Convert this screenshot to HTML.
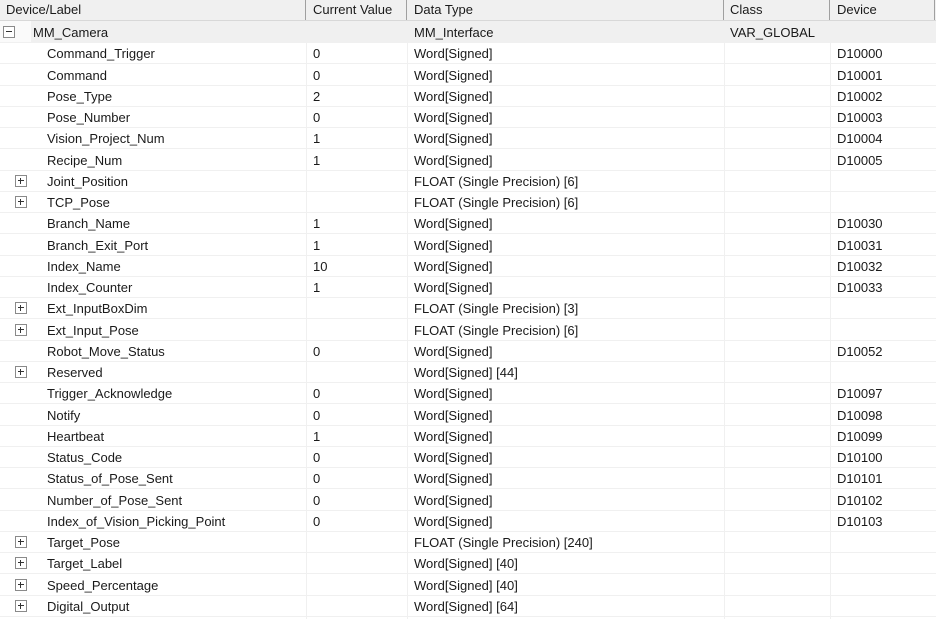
<!DOCTYPE html>
<html><head><style>
body{margin:0;width:936px;height:619px;background:#fff;overflow:hidden;font-family:"Liberation Sans",sans-serif;font-size:13px;color:#1a1a1a;position:relative}
.h{position:absolute;left:0;top:0;width:936px;height:20px;background:#f0f0f0;border-bottom:1px solid #d8d8d8}
.h span{position:absolute;top:2px}
.hs{position:absolute;top:0;width:1px;height:20px;background:#a0a0a0}
.r{position:absolute;left:0;width:936px;height:21px;border-bottom:1px solid #f0f0f0;box-sizing:border-box}
.r span{position:absolute;top:3px;white-space:nowrap}
.a{left:47px}.b{left:313px}.c{left:414px}.d{left:730px}.e{left:837px}
.v{position:absolute;top:21px;width:1px;height:598px;background:#f0f0f0}
.p{position:absolute;left:15px;top:4px;width:10px;height:10px;border:1px solid #8a8a8a;background:#fff}
.p:before{content:"";position:absolute;left:2px;top:4px;width:6px;height:1px;background:#333}
.p.x:after{content:"";position:absolute;left:4px;top:2px;width:1px;height:6px;background:#333}
</style></head><body>
<div class="h"><span style="left:6px">Device/Label</span><span style="left:313px">Current Value</span><span style="left:414px">Data Type</span><span style="left:730px">Class</span><span style="left:837px">Device</span>
<div class="hs" style="left:305px"></div><div class="hs" style="left:406px"></div><div class="hs" style="left:723px"></div><div class="hs" style="left:829px"></div><div class="hs" style="left:934px"></div></div>
<div class="v" style="left:306px"></div><div class="v" style="left:407px"></div><div class="v" style="left:724px"></div><div class="v" style="left:830px"></div>
<div class="r" style="top:21px;height:22px;background:#f0f0f0"><div style="position:absolute;left:0;top:0;width:31px;height:21px;background:#fafafa"></div><div class="p" style="left:3px;top:5px"></div><span style="left:33px;top:4px">MM_Camera</span><span class="c" style="top:4px">MM_Interface</span><span class="d" style="top:4px">VAR_GLOBAL</span></div>
<div class="r" style="top:43px"><span class="a">Command_Trigger</span><span class="b">0</span><span class="c">Word[Signed]</span><span class="e">D10000</span></div>
<div class="r" style="top:65px"><span class="a">Command</span><span class="b">0</span><span class="c">Word[Signed]</span><span class="e">D10001</span></div>
<div class="r" style="top:86px"><span class="a">Pose_Type</span><span class="b">2</span><span class="c">Word[Signed]</span><span class="e">D10002</span></div>
<div class="r" style="top:107px"><span class="a">Pose_Number</span><span class="b">0</span><span class="c">Word[Signed]</span><span class="e">D10003</span></div>
<div class="r" style="top:128px"><span class="a">Vision_Project_Num</span><span class="b">1</span><span class="c">Word[Signed]</span><span class="e">D10004</span></div>
<div class="r" style="top:150px"><span class="a">Recipe_Num</span><span class="b">1</span><span class="c">Word[Signed]</span><span class="e">D10005</span></div>
<div class="r" style="top:171px"><div class="p x"></div><span class="a">Joint_Position</span><span class="c">FLOAT (Single Precision) [6]</span></div>
<div class="r" style="top:192px"><div class="p x"></div><span class="a">TCP_Pose</span><span class="c">FLOAT (Single Precision) [6]</span></div>
<div class="r" style="top:213px"><span class="a">Branch_Name</span><span class="b">1</span><span class="c">Word[Signed]</span><span class="e">D10030</span></div>
<div class="r" style="top:235px"><span class="a">Branch_Exit_Port</span><span class="b">1</span><span class="c">Word[Signed]</span><span class="e">D10031</span></div>
<div class="r" style="top:256px"><span class="a">Index_Name</span><span class="b">10</span><span class="c">Word[Signed]</span><span class="e">D10032</span></div>
<div class="r" style="top:277px"><span class="a">Index_Counter</span><span class="b">1</span><span class="c">Word[Signed]</span><span class="e">D10033</span></div>
<div class="r" style="top:298px"><div class="p x"></div><span class="a">Ext_InputBoxDim</span><span class="c">FLOAT (Single Precision) [3]</span></div>
<div class="r" style="top:320px"><div class="p x"></div><span class="a">Ext_Input_Pose</span><span class="c">FLOAT (Single Precision) [6]</span></div>
<div class="r" style="top:341px"><span class="a">Robot_Move_Status</span><span class="b">0</span><span class="c">Word[Signed]</span><span class="e">D10052</span></div>
<div class="r" style="top:362px"><div class="p x"></div><span class="a">Reserved</span><span class="c">Word[Signed] [44]</span></div>
<div class="r" style="top:383px"><span class="a">Trigger_Acknowledge</span><span class="b">0</span><span class="c">Word[Signed]</span><span class="e">D10097</span></div>
<div class="r" style="top:405px"><span class="a">Notify</span><span class="b">0</span><span class="c">Word[Signed]</span><span class="e">D10098</span></div>
<div class="r" style="top:426px"><span class="a">Heartbeat</span><span class="b">1</span><span class="c">Word[Signed]</span><span class="e">D10099</span></div>
<div class="r" style="top:447px"><span class="a">Status_Code</span><span class="b">0</span><span class="c">Word[Signed]</span><span class="e">D10100</span></div>
<div class="r" style="top:468px"><span class="a">Status_of_Pose_Sent</span><span class="b">0</span><span class="c">Word[Signed]</span><span class="e">D10101</span></div>
<div class="r" style="top:490px"><span class="a">Number_of_Pose_Sent</span><span class="b">0</span><span class="c">Word[Signed]</span><span class="e">D10102</span></div>
<div class="r" style="top:511px"><span class="a">Index_of_Vision_Picking_Point</span><span class="b">0</span><span class="c">Word[Signed]</span><span class="e">D10103</span></div>
<div class="r" style="top:532px"><div class="p x"></div><span class="a">Target_Pose</span><span class="c">FLOAT (Single Precision) [240]</span></div>
<div class="r" style="top:553px"><div class="p x"></div><span class="a">Target_Label</span><span class="c">Word[Signed] [40]</span></div>
<div class="r" style="top:575px"><div class="p x"></div><span class="a">Speed_Percentage</span><span class="c">Word[Signed] [40]</span></div>
<div class="r" style="top:596px"><div class="p x"></div><span class="a">Digital_Output</span><span class="c">Word[Signed] [64]</span></div>
</body></html>
